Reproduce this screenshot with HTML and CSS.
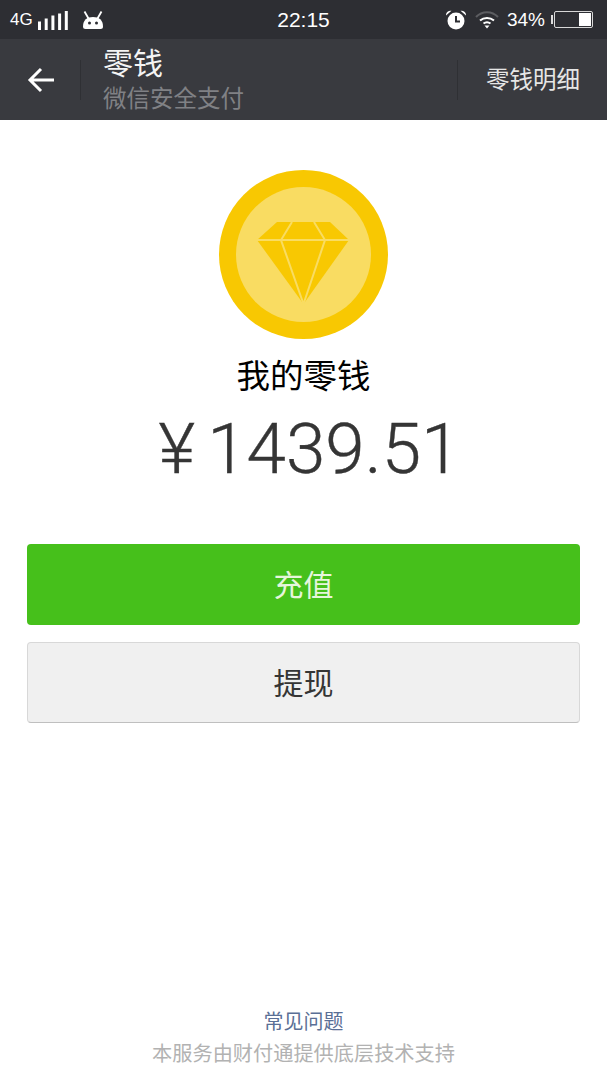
FILE: index.html
```html
<!DOCTYPE html>
<html lang="zh">
  <head>
    <meta charset="utf-8">
    <title>零钱</title>
    <link rel="stylesheet" href="styles.css">
  </head>
  <body>
    <div class="page">
      <!--상태바-->
      <div class="statusbar">
        <div class="status-left">
          <span class="net">4G</span>
          <svg class="signal" width="30" height="19" viewBox="0 0 30 19">
            <rect x="0" y="10.500" width="3" height="8.500" fill="#fff"/>
            <rect x="6.700" y="7.500" width="3" height="11.500" fill="#fff"/>
            <rect x="13.400" y="4.500" width="3" height="14.500" fill="#fff"/>
            <rect x="20.100" y="2.500" width="3" height="16.500" fill="#fff"/>
            <rect x="26.800" y="0" width="3" height="19" fill="#fff"/>
          </svg>
          <svg class="android" width="20" height="18" viewBox="0 0 20 18">
            <path d="M0 15.500C0 9 4 6 10 6s10 3 10 9.500a2.500 2.500 0 0 1-2.500 2.500h-15A2.500 2.500 0 0 1 0 15.500z" fill="#fff"/>
            <path d="M1.500 .5l4 7M18.500 .5l-4 7" stroke="#fff" stroke-width="1.800" fill="none"/>
            <circle cx="6.500" cy="12" r="1.500" fill="#2d2e33"/>
            <circle cx="13.500" cy="12" r="1.500" fill="#2d2e33"/>
          </svg>
        </div>
        <div class="clock">22:15</div>
        <div class="status-right">
          <svg class="alarm" width="20" height="20" viewBox="0 0 20 20">
            <circle cx="10" cy="11" r="8.500" fill="#fff"/>
            <path d="M0 5.500A4.500 4.500 0 0 1 5.500 .8zM20 5.500A4.500 4.500 0 0 0 14.500 .8z" fill="#fff"/>
            <path d="M10 6v5.500h4" stroke="#2d2e33" stroke-width="2" fill="none"/>
          </svg>
          <svg class="wifi" width="24" height="18" viewBox="0 0 24 18">
            <path d="M1 6c6-6.500 16-6.500 22 0" stroke="#5c5d61" stroke-width="2" fill="none"/>
            <path d="M5 9.500c4-3.500 10-3.500 14 0" stroke="#fff" stroke-width="2" fill="none"/>
            <path d="M8.500 12.500c2-1.500 5-1.500 7 0" stroke="#fff" stroke-width="2" fill="none"/>
            <path d="M9.500 14.500h5L12 17.500z" fill="#fff"/>
          </svg>
          <span class="percent">34%</span>
          <div class="battery-tip"></div>
          <div class="battery"><div class="battery-fill"></div></div>
        </div>
      </div>
      <!--상단 메뉴-->
      <div class="navbar">
        <div class="back">
          <svg width="30" height="30" viewBox="0 0 30 30">
            <path d="M28 15H4M15 4L4 15l11 11" stroke="#fff" stroke-width="3" fill="none"/>
          </svg>
        </div>
        <div class="titles">
          <div class="title">零钱</div>
          <div class="subtitle">微信安全支付</div>
        </div>
        <div class="detail">零钱明细</div>
      </div>
      <!--본문-->
      <div class="content">
        <svg class="coin" width="169" height="169" viewBox="0 0 169 169">
          <circle cx="84.500" cy="84.500" r="84.500" fill="#f8c802"/>
          <circle cx="84.500" cy="84.500" r="67.500" fill="#f9dc62"/>
          <path d="M58 52h53l19 18-45.500 64L38 70z" fill="#f8c802"/>
          <path d="M38 70h92M73 52L62 70l22.500 64L106 70 95 52" stroke="#f9dc62" stroke-width="2" fill="none"/>
        </svg>
        <div class="label">我的零钱</div>
        <div class="amount"><span class="yen">¥</span>1439.51</div>
        <a class="btn btn-green" href="#">充值</a>
        <a class="btn btn-gray" href="#">提现</a>
      </div>
      <!--하단-->
      <div class="footer">
        <a class="faq" href="#">常见问题</a>
        <div class="support">本服务由财付通提供底层技术支持</div>
      </div>
    </div>
  </body>
</html>
```

FILE: styles.css
```css
html,
body {
  margin: 0;
  padding: 0;
  background-color: #fff;
}
.page {
  width: 607px;
  height: 1080px;
  display: flex;
  flex-direction: column;
  font-family: "Liberation Sans", "Noto Sans CJK SC", sans-serif;
  overflow: hidden;
}
a {
  text-decoration: none;
}
.statusbar {
  height: 39px;
  flex: none;
  display: grid;
  grid-template-columns: 1fr auto 1fr;
  align-items: center;
  padding: 0 14px;
  background-color: #2d2e33;
  color: #fff;
}
.status-left,
.status-right {
  display: flex;
  align-items: center;
}
.status-right {
  justify-content: flex-end;
}
.net {
  font-size: 17px;
  margin-left: -4px;
  margin-right: 5px;
}
.signal {
  margin-top: 1px;
  margin-right: 15px;
}
.clock {
  font-size: 21px;
}
.wifi {
  margin-left: 9px;
}
.percent {
  font-size: 19px;
  margin-left: 8px;
}
.battery-tip {
  width: 2px;
  height: 9px;
  margin-left: 6px;
  margin-right: 1px;
  background-color: #ddd;
}
.battery {
  width: 39px;
  height: 17px;
  box-sizing: border-box;
  padding: 1px;
  display: flex;
  justify-content: flex-end;
  border: 1px solid #d8d8d8;
  border-radius: 2px;
}
.battery-fill {
  width: 12px;
  background-color: #fff;
}
.navbar {
  height: 81px;
  flex: none;
  display: flex;
  align-items: center;
  background-color: #393a3f;
  color: #fff;
}
.back {
  width: 81px;
  height: 40px;
  box-sizing: border-box;
  display: flex;
  align-items: center;
  padding-left: 26px;
  border-right: 1px solid #2f3034;
}
.titles {
  flex: 1;
  padding-left: 22px;
}
.title {
  font-size: 30px;
  line-height: 36px;
  margin-bottom: 2px;
  color: #f4f4f4;
}
.subtitle {
  font-size: 23.500px;
  line-height: 30px;
  color: #808185;
}
.detail {
  height: 40px;
  line-height: 40px;
  padding: 0 27px 0 28px;
  font-size: 23.500px;
  color: #e6e6e6;
  border-left: 1px solid #2f3034;
}
.content {
  flex: 1;
  display: flex;
  flex-direction: column;
  align-items: center;
  padding: 50px 27px 0;
}
.coin {
  display: block;
}
.label {
  margin-top: 17px;
  font-size: 33.500px;
  line-height: 42px;
  color: #000;
}
.amount {
  margin-top: 11px;
  margin-left: 12px;
  font-family: Roboto, "Liberation Sans", sans-serif;
  font-weight: 300;
  font-size: 71px;
  line-height: 80px;
  color: #353535;
  -webkit-text-stroke: 0.4px #353535;
}
.yen {
  margin-right: 12px;
}
.btn {
  width: 100%;
  height: 81px;
  box-sizing: border-box;
  display: flex;
  align-items: center;
  justify-content: center;
  padding-bottom: 3px;
  font-size: 30px;
  border-radius: 4px;
}
.btn-green {
  margin-top: 55px;
  background-color: #46c01b;
  color: #e6f6dc;
}
.btn-gray {
  margin-top: 17px;
  background-color: #f0f0f0;
  color: #353535;
  border: 1px solid #d8d8d8;
  border-bottom-color: #bfbfbf;
}
.footer {
  flex: none;
  display: flex;
  flex-direction: column;
  align-items: center;
  padding-bottom: 11px;
}
.faq {
  font-size: 20px;
  line-height: 30px;
  color: #5a6f96;
}
.support {
  margin-top: 2px;
  font-size: 20.200px;
  line-height: 30px;
  color: #b2b2b2;
}
```
